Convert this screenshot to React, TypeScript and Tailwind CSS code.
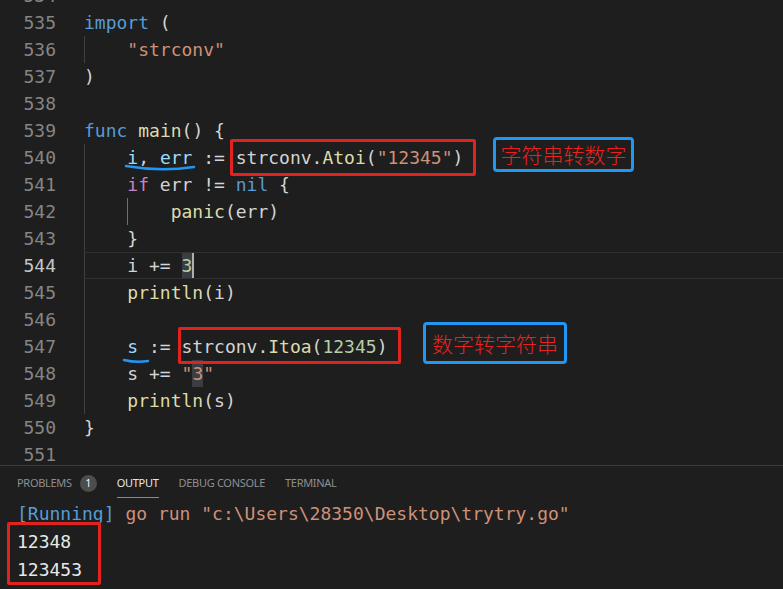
import React from 'react';

type Tok = [string, string];

const KW = 'text-[#569cd6]';
const STR = 'text-[#ce9178]';
const FN = 'text-[#dcdcaa]';
const VAR = 'text-[#9cdcfe]';
const CTL = 'text-[#c586c0]';
const NUM = 'text-[#b5cea8]';
const TXT = 'text-[#d4d4d4]';

interface CodeLine {
  n: number;
  indent: number;
  toks: Tok[];
  current?: boolean;
}

// lines 534..551 of the go file
const lines: CodeLine[] = [
  { n: 534, indent: 0, toks: [] },
  { n: 535, indent: 0, toks: [['import', KW], [' (', TXT]] },
  { n: 536, indent: 1, toks: [['"strconv"', STR]] },
  { n: 537, indent: 0, toks: [[')', TXT]] },
  { n: 538, indent: 0, toks: [] },
  { n: 539, indent: 0, toks: [['func', KW], [' ', TXT], ['main', FN], ['() {', TXT]] },
  {
    n: 540,
    indent: 1,
    toks: [['i', VAR], [', ', TXT], ['err', VAR], [' := strconv.', TXT], ['Atoi', FN], ['(', TXT], ['"12345"', STR], [')', TXT]],
  },
  { n: 541, indent: 1, toks: [['if', CTL], [' err != ', TXT], ['nil', KW], [' {', TXT]] },
  { n: 542, indent: 2, toks: [['panic', FN], ['(err)', TXT]] },
  { n: 543, indent: 1, toks: [['}', TXT]] },
  { n: 544, indent: 1, toks: [['i += ', TXT]], current: true },
  { n: 545, indent: 1, toks: [['println', FN], ['(i)', TXT]] },
  { n: 546, indent: 1, toks: [] },
  { n: 547, indent: 1, toks: [['s', VAR], [' := strconv.', TXT], ['Itoa', FN], ['(', TXT], ['12345', NUM], [')', TXT]] },
  { n: 548, indent: 1, toks: [['s += ', TXT], ['"', STR]] },
  { n: 549, indent: 1, toks: [['println', FN], ['(s)', TXT]] },
  { n: 550, indent: 0, toks: [['}', TXT]] },
  { n: 551, indent: 0, toks: [] },
];

function Line({ line }: { line: CodeLine }) {
  return (
    <div className="flex h-[27px] leading-[27px]">
      <div
        className={
          'w-[84px] shrink-0 pr-[28px] text-right ' + (line.current ? 'text-[#c6c6c6]' : 'text-[#858585]')
        }
      >
        {line.n}
      </div>
      <div
        className={
          'flex flex-1 whitespace-pre ' + (line.current ? 'border-y border-[#303030] leading-[25px]' : '')
        }
      >
        {Array.from({ length: line.indent }).map((_, i) => (
          <span
            key={i}
            className={
              'w-[4ch] shrink-0 border-l ' + (line.n === 542 && i === 1 ? 'border-[#6e6e6e]' : 'border-[#404040]')
            }
          />
        ))}
        {line.toks.map(([t, c], i) => (
          <span key={i} className={c}>
            {t}
          </span>
        ))}
        {line.n === 544 && (
          <span className="bg-[#3a3d41] text-[#b5cea8] border-r-2 border-[#aeafad]">3</span>
        )}
        {line.n === 548 && (
          <>
            <span className="bg-[#3a3d41] text-[#ce9178]">3</span>
            <span className={STR}>"</span>
          </>
        )}
      </div>
    </div>
  );
}

function Tab({ label, active, badge }: { label: string; active?: boolean; badge?: string }) {
  return (
    <div
      className={
        'flex items-center gap-[8px] pt-[4px] ' +
        (active ? 'text-[#e7e7e7] border-b border-[#8a8a8a]' : 'text-[#8f8f8f] border-b border-transparent')
      }
    >
      <span>{label}</span>
      {badge && (
        <span className="flex h-[17px] w-[17px] items-center justify-center rounded-full bg-[#4d4d4d] text-[10px] text-white">
          {badge}
        </span>
      )}
    </div>
  );
}

export default function App() {
  return (
    <div className="relative flex h-[589px] w-[783px] flex-col overflow-hidden bg-[#1e1e1e] font-['DejaVu_Sans_Mono',monospace] text-[18px] text-[#d4d4d4]">
      {/* editor */}
      <div className="h-[465px] shrink-0 overflow-hidden">
        <div className="mt-[-18px]">
          {lines.map((l) => (
            <Line key={l.n} line={l} />
          ))}
        </div>
      </div>

      {/* panel */}
      <div className="flex flex-1 flex-col border-t border-[#3c3c3c]">
        <div className="flex h-[32px] gap-[20px] pl-[17px] font-['Noto_Sans',sans-serif] text-[11px] tracking-[-0.3px]">
          <Tab label="PROBLEMS" badge="1" />
          <Tab label="OUTPUT" active />
          <Tab label="DEBUG CONSOLE" />
          <Tab label="TERMINAL" />
        </div>
        <div className="pl-[17px] pt-[2px] leading-[28px] whitespace-pre">
          <div>
            <span className="text-[#569cd6]">[Running]</span>
            <span className="text-[#ce9178]"> go run "c:\Users\28350\Desktop\trytry.go"</span>
          </div>
          <div className="text-[#e8e8e8]">12348</div>
          <div className="text-[#e8e8e8]">123453</div>
        </div>
      </div>

      {/* annotations */}
      <div className="absolute left-[230px] top-[139px] h-[37px] w-[246px] rounded-[2px] border-[3px] border-[#e0231f]" />
      <div className="absolute left-[493px] top-[137px] flex h-[35px] w-[141px] items-center justify-center rounded-[4px] border-[3px] border-[#2196f3] font-['Noto_Sans_CJK_SC',sans-serif] text-[21px] font-light leading-none text-[#e8231f]">
        字符串转数字
      </div>
      <div className="absolute left-[178px] top-[327px] h-[37px] w-[223px] rounded-[2px] border-[3px] border-[#e0231f]" />
      <div className="absolute left-[423px] top-[322px] flex h-[42px] w-[144px] items-center justify-center rounded-[4px] border-[3px] border-[#2196f3] font-['Noto_Sans_CJK_SC',sans-serif] text-[21px] font-light leading-none text-[#e8231f]">
        数字转字符串
      </div>
      <div className="absolute left-[7px] top-[522px] h-[63px] w-[94px] rounded-[2px] border-[3px] border-[#e0231f]" />

      <svg className="absolute left-[124px] top-[163px]" width="72" height="10" viewBox="0 0 72 10">
        <path d="M2 3 Q36 9 70 4" stroke="#2196f3" strokeWidth="2.5" fill="none" strokeLinecap="round" />
      </svg>
      <svg className="absolute left-[122px] top-[357px]" width="28" height="8" viewBox="0 0 28 8">
        <path d="M2 3 Q14 6 26 4" stroke="#2196f3" strokeWidth="2.5" fill="none" strokeLinecap="round" />
      </svg>
    </div>
  );
}
